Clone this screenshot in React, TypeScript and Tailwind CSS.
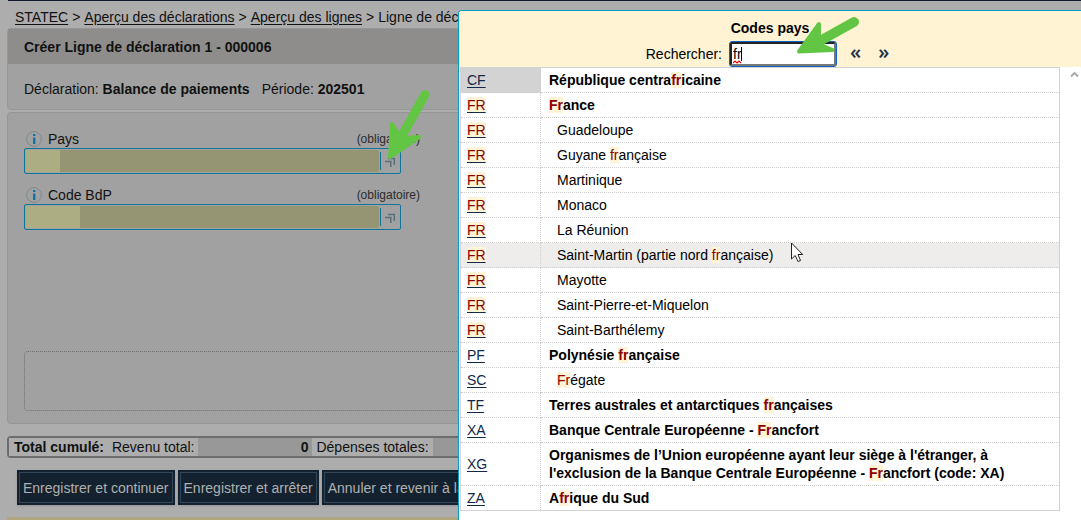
import { useState } from 'react';
import type { ReactNode } from 'react';

type Country = { code: string; name: string; indent?: boolean; hover?: boolean };

const countries: Country[] = [
  { code: 'CF', name: 'République centrafricaine' },
  { code: 'FR', name: 'France' },
  { code: 'FR', name: 'Guadeloupe', indent: true },
  { code: 'FR', name: 'Guyane française', indent: true },
  { code: 'FR', name: 'Martinique', indent: true },
  { code: 'FR', name: 'Monaco', indent: true },
  { code: 'FR', name: 'La Réunion', indent: true },
  { code: 'FR', name: 'Saint-Martin (partie nord française)', indent: true, hover: true },
  { code: 'FR', name: 'Mayotte', indent: true },
  { code: 'FR', name: 'Saint-Pierre-et-Miquelon', indent: true },
  { code: 'FR', name: 'Saint-Barthélemy', indent: true },
  { code: 'PF', name: 'Polynésie française' },
  { code: 'SC', name: 'Frégate', indent: true },
  { code: 'TF', name: 'Terres australes et antarctiques françaises' },
  { code: 'XA', name: 'Banque Centrale Européenne - Francfort' },
  {
    code: 'XG',
    name: "Organismes de l’Union européenne ayant leur siège à l'étranger, à l'exclusion de la Banque Centrale Européenne - Francfort (code: XA)"
  },
  { code: 'ZA', name: 'Afrique du Sud' }
];

// Wraps every occurrence of the search term in a <mark>
const Highlight = ({ text, term }: { text: string; term: string }) => {
  if (!term) return <>{text}</>;
  const parts: ReactNode[] = [];
  const lower = text.toLowerCase();
  const needle = term.toLowerCase();
  let from = 0;
  let at = lower.indexOf(needle);
  while (at !== -1) {
    parts.push(text.slice(from, at));
    parts.push(
      <mark key={at} className="bg-[#fff5d6] text-[#8b0000]">
        {text.slice(at, at + needle.length)}
      </mark>
    );
    from = at + needle.length;
    at = lower.indexOf(needle, from);
  }
  parts.push(text.slice(from));
  return <>{parts}</>;
};

const InfoIcon = () => (
  <svg width="16" height="16" viewBox="0 0 16 16" aria-hidden="true">
    <circle cx="8" cy="8" r="7.4" fill="none" stroke="#7b8c90" strokeWidth="1" />
    <rect x="7" y="3" width="2.4" height="2" fill="#0d75a5" />
    <rect x="7" y="6.500" width="2.4" height="6.500" fill="#0d75a5" />
  </svg>
);

const LookupField = ({ id, label, codeWidth }: { id: string; label: string; codeWidth: string }) => (
  <div className="mb-2 w-[396px]">
    <div className="flex h-5 items-center pt-0.5">
      <button type="button" aria-label={`Aide ${label}`} className="ml-0.5">
        <InfoIcon />
      </button>
      <label htmlFor={id} className="ml-1.5 flex-1">
        {label}
      </label>
      <span className="text-xs text-[#2b2b2b]">(obligatoire)</span>
    </div>
    <div className="flex h-[26px] w-[377px] rounded-xs border border-[#11759b] p-px">
      <input id={id} className={`h-full bg-[#adad84] outline-none ${codeWidth}`} />
      <div className="flex-1 rounded-r-xs bg-[#959574]" />
      <button
        type="button"
        aria-label={`Choisir ${label}`}
        className="my-0.5 ml-px flex w-[19px] items-center justify-center border-l border-[#11759b] pt-0.5"
      >
        <svg width="12" height="12" viewBox="0 0 12 12" fill="none" stroke="#57707c" strokeWidth="1.5">
          <path d="M4 2.5H10.3V9" />
          <path d="M1 5.5H6.8V11" />
        </svg>
      </button>
    </div>
  </div>
);

const ActionButton = ({ children }: { children: ReactNode }) => (
  <button
    type="button"
    className="h-[35px] shrink-0 border border-[#14222f] bg-[#14222f] p-px text-[#b0b0b0] shadow-sm"
  >
    <span className="flex h-full items-center border border-[#33475a] px-[3px] whitespace-nowrap">{children}</span>
  </button>
);

const DeclarationPage = () => (
  <div className="pl-[7px]">
    <div className="ml-px h-px bg-[#0e1a2c]" />
    <nav className="flex h-[27px] items-end gap-1 pb-px pl-2 leading-5 whitespace-nowrap">
      <a href="#statec" className="underline underline-offset-2">STATEC</a>
      <span>&gt;</span>
      <a href="#declarations" className="underline underline-offset-2">Aperçu des déclarations</a>
      <span>&gt;</span>
      <a href="#lignes" className="underline underline-offset-2">Aperçu des lignes</a>
      <span>&gt;</span>
      <span>Ligne de déclaration</span>
    </nav>

    <section className="rounded-sm border border-[#969696] bg-[#a1a1a1]">
      <h1 className="flex h-[35px] items-center bg-[#8e8d8c] px-4 font-bold">Créer Ligne de déclaration 1 - 000006</h1>
      <div className="flex h-[45px] items-center gap-3 px-4 pt-1">
        <span>
          Déclaration: <b>Balance de paiements</b>
        </span>
        <span>
          Période: <b>202501</b>
        </span>
      </div>
    </section>

    <section className="mt-0.5 rounded-sm border border-[#969696] bg-[#a1a1a1] px-4 pt-[15px] pb-3">
      <LookupField id="pays" label="Pays" codeWidth="w-[34px]" />
      <div className="h-0.5" />
      <LookupField id="bdp" label="Code BdP" codeWidth="w-[54px]" />
      <div className="mt-[121px] h-[60px] rounded-sm border border-dotted border-[#6d6d6d]" />
    </section>

    <div className="mt-3 flex h-[22px] items-center rounded-sm border-2 border-[#6d6d6d] bg-[#989898] whitespace-nowrap">
      <b className="h-full bg-[#adadad] pr-2 pl-[5px] leading-[18px]">Total cumulé:</b>
      <span className="h-full bg-[#adadad] pr-1 leading-[18px]">Revenu total:</span>
      <b className="w-[114px] pr-1 text-right leading-[18px]">0</b>
      <span className="h-full bg-[#adadad] px-1 leading-[18px]">Dépenses totales:</span>
    </div>

    <div className="mt-3 flex gap-[3px] pl-2.5">
      <ActionButton>Enregistrer et continuer</ActionButton>
      <ActionButton>Enregistrer et arrêter</ActionButton>
      <ActionButton>Annuler et revenir à la liste</ActionButton>
    </div>
    <div className="mt-3 h-[3px] bg-[#b0a57c]" />
  </div>
);

const CountryDialog = () => {
  const [term, setTerm] = useState('fr');

  return (
    <div
      role="dialog"
      aria-labelledby="dialog-title"
      className="absolute top-[10px] right-0 bottom-0 left-[458px] overflow-hidden rounded-tl-sm border-t border-l border-[#009fc8] bg-white text-black"
    >
      <header className="h-14 bg-[#fff3d3] pt-[7px]">
        <h2 id="dialog-title" className="text-center leading-5 font-bold">Codes pays</h2>
        <div className="mt-1 flex h-6 items-center justify-center pr-[5px]">
          <label htmlFor="search">Rechercher:</label>
          <div className="relative ml-2">
            <input
              id="search"
              value={term}
              onChange={e => setTerm(e.target.value)}
              className="block h-6 w-[106px] rounded-xs border-2 border-t-[#222] border-r-[#777] border-b-[#777] border-l-[#222] bg-white pl-px outline outline-[#0d62c4]"
            />
            {/* caret and spelling mark */}
            <svg className="pointer-events-none absolute top-1 left-[3px] z-10" width="12" height="18" viewBox="0 0 12 18" fill="none">
              <path d="M8.500 1V15" stroke="#000" />
              <path d="M0 17l2 -2 2 2 2 -2 2 2" stroke="#f00000" strokeWidth="1.2" />
            </svg>
          </div>
          <button type="button" aria-label="Précédent" className="ml-3.5 h-6 pb-1 font-['Open_Sans',sans-serif] text-xl leading-5 font-semibold text-[#1b3145]">«</button>
          <button type="button" aria-label="Suivant" className="ml-[17px] h-6 pb-1 font-['Open_Sans',sans-serif] text-xl leading-5 font-semibold text-[#1b3145]">»</button>
        </div>
      </header>

      <div className="flex items-start pl-px">
        <table className="mr-[21px] w-full table-fixed border-separate border-spacing-0 border border-[#d3d3d3]">
          <tbody>
            {countries.map((c, i) => (
              <tr key={i} className={c.hover ? 'group bg-[#eeedec]' : 'group'}>
                <td className={`h-[25px] w-20 border-r border-b border-dotted border-[#cfcfcf] p-0 pl-1.5 leading-[18px] group-last:h-6 group-last:border-b-0 ${i === 0 ? 'bg-[#d3d3d3]' : ''}`}>
                  <a href={`#${c.code}`} className="text-[#12284a] underline underline-offset-2">
                    <Highlight text={c.code} term={term} />
                  </a>
                </td>
                <td className={`border-b border-dotted border-[#cfcfcf] py-[3px] pr-12 leading-[18px] group-last:border-b-0 ${c.indent ? 'pl-4' : 'pl-2 font-bold'}`}>
                  <Highlight text={c.name} term={term} />
                </td>
              </tr>
            ))}
          </tbody>
        </table>
      </div>

      <svg className="absolute top-[60px] right-0.5" width="9" height="7" viewBox="0 0 9 7" fill="none" stroke="#aaa" strokeWidth="2">
        <path d="M1 5.5L4.5 2L8 5.5" />
      </svg>
    </div>
  );
};

export default function App() {
  return (
    <div className="relative min-h-screen overflow-hidden bg-[#adadad] font-['Liberation_Sans',Arial,sans-serif] text-sm text-[#111]">
      <DeclarationPage />
      <CountryDialog />

      {/* annotation arrows and mouse pointer */}
      <svg className="pointer-events-none absolute top-[88px] left-[384px]" width="48" height="74" fill="#62c544" stroke="#62c544" strokeLinecap="round" strokeLinejoin="round">
        <path d="M41 6.500L19 46" strokeWidth="9" />
        <path d="M6 69L8 36L15 47L22 50L35 49Z" strokeWidth="4" />
      </svg>
      <svg className="pointer-events-none absolute top-[12px] left-[792px]" width="72" height="46" fill="#62c544" stroke="#62c544" strokeLinecap="round" strokeLinejoin="round">
        <path d="M62 10L26 30" strokeWidth="10" />
        <path d="M7 39.500L27 12L27 25L31 34L40.500 38Z" strokeWidth="4" />
      </svg>
      <svg className="pointer-events-none absolute top-[242px] left-[791px]" width="13" height="21" viewBox="0 0 13 21">
        <path d="M.5 1V17L4.200 13.500L7 19.500L9.500 18.500L7 12.500H11.700Z" fill="#fff" stroke="#222" />
      </svg>
    </div>
  );
}
